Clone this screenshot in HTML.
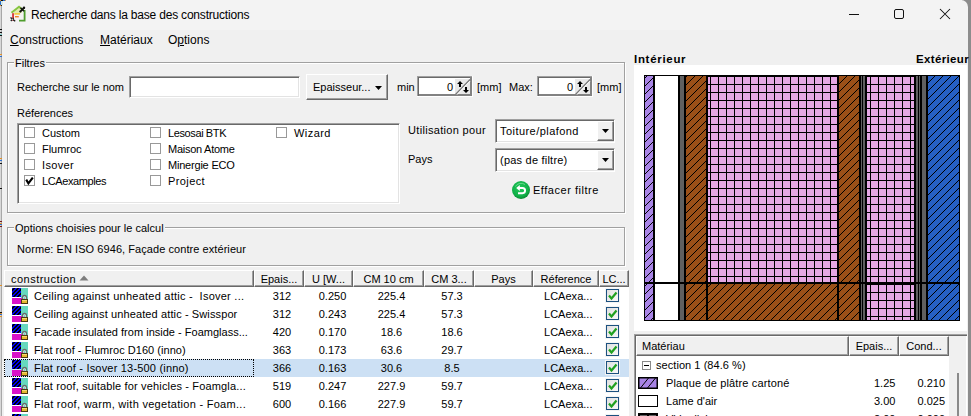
<!DOCTYPE html>
<html><head><meta charset="utf-8">
<style>
*{box-sizing:border-box}
html,body{margin:0;padding:0}
body{width:971px;height:416px;overflow:hidden;position:relative;background:#f0f0f0;font-family:"Liberation Sans",sans-serif;font-size:11px;color:#000}
.a{position:absolute}
.t{position:absolute;white-space:nowrap;line-height:13px}
.gb{position:absolute;border:1px solid #a0a0a0;box-shadow:inset 1px 1px 0 #fff,1px 1px 0 #fff}
.gbl{position:absolute;background:#f0f0f0;padding:0 1px;line-height:13px;white-space:nowrap}
.sunk{position:absolute;background:#fff;border-top:1px solid #a0a0a0;border-left:1px solid #a0a0a0;border-right:1px solid #fff;border-bottom:1px solid #fff;box-shadow:inset 1px 1px 0 #696969,inset -1px -1px 0 #e3e3e3}
.cb{position:absolute;width:11px;height:11px;border:1px solid #999;background:#fff}
.hdr{position:absolute;top:270px;height:17px;background:#f0f0f0;border-top:1px solid #fff;border-left:1px solid #fff;border-right:1px solid #696969;border-bottom:1px solid #696969;box-shadow:inset -1px -1px 0 #a0a0a0;text-align:center;line-height:16px;white-space:nowrap;overflow:hidden}
.row{position:absolute;left:5px;width:624px;height:18px}
.c{position:absolute;top:3px;line-height:13px;white-space:nowrap}
.chk{position:absolute;left:606px;top:2px;width:13px;height:13px;border:1px solid #1c5180;background:linear-gradient(135deg,#e0e0e0,#f8f8f8);box-shadow:0 0 0 1px #f4f4f4}
</style></head>
<body>
<!-- left edge behind window -->
<div class="a" style="left:0;top:0;width:2px;height:416px;background:#d8d8d8"></div>
<div class="a" style="left:1px;top:0;width:1px;height:416px;background:#a8a8a8"></div>
<svg class="a" style="left:0;top:0;z-index:1" width="2" height="416" shape-rendering="crispEdges"><rect x="0" y="29" width="2" height="1" fill="#111"/><rect x="0" y="32" width="2" height="1" fill="#111"/><rect x="0" y="34" width="2" height="1" fill="#7fd0d0"/><rect x="0" y="35" width="2" height="1" fill="#111"/><rect x="0" y="54" width="2" height="1" fill="#e0902a"/><rect x="0" y="56" width="2" height="1" fill="#2a6ed0"/><rect x="0" y="158" width="2" height="1" fill="#e0902a"/><rect x="0" y="160" width="2" height="1" fill="#2a6ed0"/><rect x="0" y="163" width="2" height="1" fill="#111"/><rect x="0" y="188" width="2" height="1" fill="#111"/><rect x="0" y="221" width="2" height="1" fill="#7a1a1a"/><rect x="0" y="223" width="2" height="1" fill="#e0902a"/><rect x="0" y="224" width="2" height="1" fill="#2a6ed0"/><rect x="0" y="226" width="2" height="1" fill="#7a1a1a"/><rect x="0" y="285" width="2" height="1" fill="#e0902a"/><rect x="0" y="312" width="2" height="1" fill="#111"/><rect x="0" y="313" width="2" height="1" fill="#e0902a"/><rect x="0" y="314" width="2" height="1" fill="#2a6ed0"/><rect x="0" y="316" width="2" height="1" fill="#e0902a"/></svg>
<!-- right edge -->
<div class="a" style="left:968px;top:0;width:3px;height:416px;background:#8c8c8c"></div>
<!-- title bar -->
<div class="a" style="left:2px;top:0;width:966px;height:30px;background:#f3f3f3;border-top-right-radius:7px"></div>
<div class="a" style="left:962px;top:0;width:6px;height:7px;background:#8c8c8c;z-index:0"></div>
<div class="a" style="left:2px;top:0;width:966px;height:30px;background:#f3f3f3;border-top-right-radius:7px;z-index:1"></div>
<svg class="a" style="left:0;top:0;z-index:1" width="8" height="8" shape-rendering="crispEdges"><rect x="0" y="0" width="1" height="1" fill="#e0902a"/><rect x="1" y="0" width="2" height="1" fill="#111"/><rect x="3" y="0" width="2" height="1" fill="#2a6ed0"/><rect x="5" y="0" width="1" height="1" fill="#d8a050"/><rect x="0" y="1" width="1" height="4" fill="#2a6ed0"/><rect x="1" y="1" width="2" height="4" fill="#cfe8e8"/><rect x="0" y="5" width="1" height="1" fill="#e0902a"/><rect x="1" y="5" width="1" height="1" fill="#222"/></svg>
<!-- title icon -->
<svg class="a" style="left:9px;top:5px;z-index:2" width="17" height="17" viewBox="0 0 17 17">
 <path d="M5 7 L10 3 L13 5.5 L13 8 L5 8Z" fill="#d8e890" opacity="0.7"/>
 <path d="M2.5 7.8 L10 1.8 L14.5 5.5" fill="none" stroke="#86c540" stroke-width="2"/>
 <path d="M15.6 5 V15.6 H10" fill="none" stroke="#4f9d2d" stroke-width="1.8"/>
 <rect x="3.2" y="8.2" width="1.7" height="7.6" fill="#d2282c"/>
 <rect x="5.3" y="8.2" width="5.8" height="1.4" fill="#f4c21c"/>
 <rect x="6" y="11" width="3.8" height="1.4" fill="#ef8226"/>
 <path d="M11 6.8 L15.2 2.6" stroke="#111" stroke-width="1.8"/>
 <path d="M11.5 2.8 L15 6.3" stroke="#111" stroke-width="1.3"/>
 <circle cx="15" cy="2.8" r="1.2" fill="#111"/><circle cx="11.3" cy="6.6" r="1" fill="#111"/>
 <path d="M1.5 12.5 L6.2 16.2" stroke="#1a1a1a" stroke-width="1.4"/>
 <path d="M1.8 16 L4.6 12.8" stroke="#1a1a1a" stroke-width="1.2"/>
 <circle cx="3.4" cy="14.3" r="0.9" fill="#bbb"/>
</svg>
<div class="t" style="left:31px;top:8px;font-size:12px;line-height:14px;z-index:2;letter-spacing:-0.198px">Recherche dans la base des constructions</div>
<!-- window controls -->
<svg class="a" style="left:845px;top:5px;z-index:2" width="115" height="20">
 <rect x="4" y="9" width="10" height="1" fill="#111"/>
 <rect x="49.5" y="4.5" width="9" height="9" rx="1.5" fill="none" stroke="#111" stroke-width="1"/>
 <path d="M95 4 L105 14 M105 4 L95 14" stroke="#111" stroke-width="1.05"/>
</svg>
<!-- menu -->
<div class="t" style="left:10px;top:33px;font-size:12px;line-height:14px"><u>C</u>onstructions</div>
<div class="t" style="left:100px;top:33px;font-size:12px;line-height:14px"><u>M</u>atériaux</div>
<div class="t" style="left:168px;top:33px;font-size:12px;line-height:14px">O<u>p</u>tions</div>

<!-- Filtres group -->
<div class="gb" style="left:7px;top:62px;width:618px;height:151px"></div>
<div class="gbl" style="left:14px;top:57px">Filtres</div>
<div class="t" style="left:17px;top:81px;letter-spacing:-0.032px">Recherche sur le nom</div>
<div class="sunk" style="left:129px;top:76px;width:171px;height:22px"></div>
<!-- Epaisseur button -->
<div class="a" style="left:306px;top:74px;width:82px;height:26px;background:#f0f0f0;border-top:1px solid #fff;border-left:1px solid #fff;border-right:1px solid #696969;border-bottom:1px solid #696969;box-shadow:inset -1px -1px 0 #a0a0a0"></div>
<div class="t" style="left:313px;top:81px">Epaisseur...</div>
<svg class="a" style="left:375px;top:86px" width="8" height="4"><path d="M0 0H7L3.5 4Z" fill="#000"/></svg>
<div class="t" style="left:397px;top:81px">min</div>
<svg class="a" style="left:417px;top:76px" width="56" height="21" viewBox="0 0 56 21" shape-rendering="crispEdges"><rect width="56" height="21" fill="#fff"/><rect x="0" y="0" width="55" height="1" fill="#a0a0a0"/><rect x="0" y="0" width="1" height="20" fill="#a0a0a0"/><rect x="1" y="1" width="54" height="1" fill="#696969"/><rect x="1" y="1" width="1" height="19" fill="#696969"/><rect x="38" y="3" width="17" height="17" fill="#e8e8e8"/><rect x="53" y="1" width="2" height="19" fill="#828282"/><rect x="2" y="18" width="53" height="2" fill="#828282"/><path d="M38.5 18.5 L53 3.5" stroke="#7a7a7a" stroke-width="1.3" shape-rendering="auto"/><path d="M40 18.6 L53 5.2" stroke="#ffffff" stroke-width="1" shape-rendering="auto"/><path d="M40 8 L43 5 L46 8 H44 V11 H42 V8 Z" fill="#000" shape-rendering="auto"/><path d="M48 11 H50 V14 H52 L49 17 L46 14 H48 Z" fill="#000" shape-rendering="auto"/></svg>
<div class="t" style="left:447px;top:81px">0</div>

<div class="t" style="left:477px;top:81px">[mm]</div>
<div class="t" style="left:509px;top:81px">Max:</div>
<svg class="a" style="left:537px;top:76px" width="56" height="21" viewBox="0 0 56 21" shape-rendering="crispEdges"><rect width="56" height="21" fill="#fff"/><rect x="0" y="0" width="55" height="1" fill="#a0a0a0"/><rect x="0" y="0" width="1" height="20" fill="#a0a0a0"/><rect x="1" y="1" width="54" height="1" fill="#696969"/><rect x="1" y="1" width="1" height="19" fill="#696969"/><rect x="38" y="3" width="17" height="17" fill="#e8e8e8"/><rect x="53" y="1" width="2" height="19" fill="#828282"/><rect x="2" y="18" width="53" height="2" fill="#828282"/><path d="M38.5 18.5 L53 3.5" stroke="#7a7a7a" stroke-width="1.3" shape-rendering="auto"/><path d="M40 18.6 L53 5.2" stroke="#ffffff" stroke-width="1" shape-rendering="auto"/><path d="M40 8 L43 5 L46 8 H44 V11 H42 V8 Z" fill="#000" shape-rendering="auto"/><path d="M48 11 H50 V14 H52 L49 17 L46 14 H48 Z" fill="#000" shape-rendering="auto"/></svg>
<div class="t" style="left:567px;top:81px">0</div>

<div class="t" style="left:597px;top:81px">[mm]</div>

<div class="t" style="left:17px;top:107px;letter-spacing:-0.030px">Réferences</div>
<div class="sunk" style="left:17px;top:123px;width:383px;height:81px"></div>
<div class="cb" style="left:24px;top:127px"></div><div class="t" style="left:42px;top:127px;letter-spacing:0.019px">Custom</div>
<div class="cb" style="left:24px;top:143px"></div><div class="t" style="left:42px;top:143px;letter-spacing:-0.039px">Flumroc</div>
<div class="cb" style="left:24px;top:159px"></div><div class="t" style="left:42px;top:159px;letter-spacing:0.326px">Isover</div>
<div class="cb" style="left:24px;top:175px"></div><div class="t" style="left:42px;top:175px;letter-spacing:-0.398px">LCAexamples</div>
<svg class="a" style="left:25px;top:177px" width="10" height="9"><path d="M1.2 2.6 L3.4 6.3 L7.8 0.6" fill="none" stroke="#000" stroke-width="2.1"/></svg>
<div class="cb" style="left:150px;top:127px"></div><div class="t" style="left:168px;top:127px;letter-spacing:-0.388px">Lesosai BTK</div>
<div class="cb" style="left:150px;top:143px"></div><div class="t" style="left:168px;top:143px;letter-spacing:-0.264px">Maison Atome</div>
<div class="cb" style="left:150px;top:159px"></div><div class="t" style="left:168px;top:159px;letter-spacing:-0.207px">Minergie ECO</div>
<div class="cb" style="left:150px;top:175px"></div><div class="t" style="left:168px;top:175px;letter-spacing:0.392px">Project</div>
<div class="cb" style="left:276px;top:127px"></div><div class="t" style="left:294px;top:127px;letter-spacing:0.433px">Wizard</div>

<div class="t" style="left:408px;top:124px;letter-spacing:0.322px">Utilisation pour</div>
<div class="sunk" style="left:495px;top:119px;width:120px;height:24px"></div>
<div class="t" style="left:500px;top:125px;letter-spacing:0.452px">Toiture/plafond</div>
<div class="a" style="left:597px;top:121px;width:17px;height:20px;background:#f0f0f0;border-top:1px solid #fff;border-left:1px solid #fff;border-right:1px solid #696969;border-bottom:1px solid #696969;box-shadow:inset -1px -1px 0 #a0a0a0"></div>
<svg class="a" style="left:602px;top:129px" width="8" height="4"><path d="M0 0H7L3.5 4Z" fill="#000"/></svg>
<div class="t" style="left:408px;top:153px">Pays</div>
<div class="sunk" style="left:495px;top:148px;width:120px;height:24px"></div>
<div class="t" style="left:500px;top:154px;letter-spacing:0.221px">(pas de filtre)</div>
<div class="a" style="left:597px;top:150px;width:17px;height:20px;background:#f0f0f0;border-top:1px solid #fff;border-left:1px solid #fff;border-right:1px solid #696969;border-bottom:1px solid #696969;box-shadow:inset -1px -1px 0 #a0a0a0"></div>
<svg class="a" style="left:602px;top:158px" width="8" height="4"><path d="M0 0H7L3.5 4Z" fill="#000"/></svg>
<svg class="a" style="left:511px;top:180px" width="20" height="20" viewBox="0 0 20 20"><defs><radialGradient id="gg" cx="0.45" cy="0.4" r="0.6"><stop offset="0" stop-color="#22c85a"/><stop offset="0.75" stop-color="#10b048"/><stop offset="1" stop-color="#07892e"/></radialGradient></defs><circle cx="10" cy="10" r="9" fill="url(#gg)"/><path d="M4.5 6.5 A6 5 0 0 1 14 4.5" fill="none" stroke="#9af0b0" stroke-width="1" opacity="0.6"/><path d="M8 8 H11.5 A2.6 2.6 0 0 1 11.5 13.2 H7" fill="none" stroke="#fff" stroke-width="1.9"/><path d="M5.2 8 L8.8 5 V11Z" fill="#fff"/></svg>
<div class="t" style="left:533px;top:184px;letter-spacing:0.531px">Effacer filtre</div>

<!-- Options group -->
<div class="gb" style="left:7px;top:227px;width:618px;height:39px"></div>
<div class="gbl" style="left:14px;top:222px">Options choisies pour le calcul</div>
<div class="t" style="left:17px;top:243px;letter-spacing:0.064px">Norme: EN ISO 6946, Façade contre extérieur</div>

<!-- list view -->
<div class="a" style="left:4px;top:270px;width:625px;height:146px;background:#fff"></div>
<div class="hdr" style="left:4px;width:250px;text-align:left;padding-left:6px"><span style="letter-spacing:0.481px">construction</span> <svg width="10" height="6" style="vertical-align:2px"><path d="M0.5 5.5 L5 0.5 L9.5 5.5Z" fill="#7d7d7d"/></svg></div>
<div class="hdr" style="left:254px;width:50px">Epais...</div>
<div class="hdr" style="left:304px;width:49px">U [W...</div>
<div class="hdr" style="left:353px;width:71px">CM 10 cm</div>
<div class="hdr" style="left:424px;width:50px">CM 3...</div>
<div class="hdr" style="left:474px;width:59px">Pays</div>
<div class="hdr" style="left:533px;width:66px">Réference</div>
<div class="hdr" style="left:599px;width:30px">LC...</div>

<div class="row" style="top:287px;"><svg class="a" style="left:7px;top:1px" width="16" height="16" viewBox="0 0 16 16" shape-rendering="crispEdges"><rect x="0" y="0" width="9" height="9" fill="#0000f0"/><rect x="0" y="1" width="1" height="1" fill="#000"/><rect x="0" y="2" width="1" height="1" fill="#000"/><rect x="0" y="5" width="1" height="1" fill="#000"/><rect x="0" y="6" width="1" height="1" fill="#000"/><rect x="1" y="0" width="1" height="1" fill="#000"/><rect x="1" y="1" width="1" height="1" fill="#000"/><rect x="1" y="4" width="1" height="1" fill="#000"/><rect x="1" y="5" width="1" height="1" fill="#000"/><rect x="1" y="8" width="1" height="1" fill="#000"/><rect x="2" y="0" width="1" height="1" fill="#000"/><rect x="2" y="3" width="1" height="1" fill="#000"/><rect x="2" y="4" width="1" height="1" fill="#000"/><rect x="2" y="7" width="1" height="1" fill="#000"/><rect x="2" y="8" width="1" height="1" fill="#000"/><rect x="3" y="2" width="1" height="1" fill="#000"/><rect x="3" y="3" width="1" height="1" fill="#000"/><rect x="3" y="6" width="1" height="1" fill="#000"/><rect x="3" y="7" width="1" height="1" fill="#000"/><rect x="4" y="1" width="1" height="1" fill="#000"/><rect x="4" y="2" width="1" height="1" fill="#000"/><rect x="4" y="5" width="1" height="1" fill="#000"/><rect x="4" y="6" width="1" height="1" fill="#000"/><rect x="5" y="0" width="1" height="1" fill="#000"/><rect x="5" y="1" width="1" height="1" fill="#000"/><rect x="5" y="4" width="1" height="1" fill="#000"/><rect x="5" y="5" width="1" height="1" fill="#000"/><rect x="5" y="8" width="1" height="1" fill="#000"/><rect x="6" y="0" width="1" height="1" fill="#000"/><rect x="6" y="3" width="1" height="1" fill="#000"/><rect x="6" y="4" width="1" height="1" fill="#000"/><rect x="6" y="7" width="1" height="1" fill="#000"/><rect x="6" y="8" width="1" height="1" fill="#000"/><rect x="7" y="2" width="1" height="1" fill="#000"/><rect x="7" y="3" width="1" height="1" fill="#000"/><rect x="7" y="6" width="1" height="1" fill="#000"/><rect x="7" y="7" width="1" height="1" fill="#000"/><rect x="8" y="1" width="1" height="1" fill="#000"/><rect x="8" y="2" width="1" height="1" fill="#000"/><rect x="8" y="5" width="1" height="1" fill="#000"/><rect x="8" y="6" width="1" height="1" fill="#000"/><rect x="9" y="0" width="7" height="11" fill="#66d8be"/><rect x="0" y="10" width="12" height="6" fill="#d812c8"/><path d="M10.5 12V9.5A2 2 0 0 1 14.5 9.5V12" fill="none" stroke="#6a6a6a" stroke-width="1.3" shape-rendering="auto"/><path d="M11.4 12V9.8A1.1 1.1 0 0 1 13.6 9.8V12" fill="none" stroke="#e8e8e8" stroke-width="0.7" shape-rendering="auto"/><rect x="9" y="11" width="7" height="5" fill="#4a3a10"/><rect x="10" y="12" width="5" height="3" fill="#e6b830"/><rect x="10" y="12" width="5" height="1" fill="#f6d870"/></svg><div class="c" style="left:29px;letter-spacing:0.248px">Ceiling against unheated attic - &nbsp;Isover ...</div><div class="c" style="left:252px;width:50px;text-align:center">312</div><div class="c" style="left:303px;width:49px;text-align:center">0.250</div><div class="c" style="left:351px;width:71px;text-align:center">225.4</div><div class="c" style="left:422px;width:50px;text-align:center">57.3</div><div class="c" style="left:539px;letter-spacing:0.023px">LCAexa...</div><div class="chk" style="left:601px"><svg width="11" height="11" style="position:absolute;left:0;top:0"><path d="M2 5.5 L4.5 8.5 L9.5 2.5" fill="none" stroke="#20a020" stroke-width="2.2"/></svg></div></div>
<div class="row" style="top:305px;"><svg class="a" style="left:7px;top:1px" width="16" height="16" viewBox="0 0 16 16" shape-rendering="crispEdges"><rect x="0" y="0" width="9" height="9" fill="#0000f0"/><rect x="0" y="1" width="1" height="1" fill="#000"/><rect x="0" y="2" width="1" height="1" fill="#000"/><rect x="0" y="5" width="1" height="1" fill="#000"/><rect x="0" y="6" width="1" height="1" fill="#000"/><rect x="1" y="0" width="1" height="1" fill="#000"/><rect x="1" y="1" width="1" height="1" fill="#000"/><rect x="1" y="4" width="1" height="1" fill="#000"/><rect x="1" y="5" width="1" height="1" fill="#000"/><rect x="1" y="8" width="1" height="1" fill="#000"/><rect x="2" y="0" width="1" height="1" fill="#000"/><rect x="2" y="3" width="1" height="1" fill="#000"/><rect x="2" y="4" width="1" height="1" fill="#000"/><rect x="2" y="7" width="1" height="1" fill="#000"/><rect x="2" y="8" width="1" height="1" fill="#000"/><rect x="3" y="2" width="1" height="1" fill="#000"/><rect x="3" y="3" width="1" height="1" fill="#000"/><rect x="3" y="6" width="1" height="1" fill="#000"/><rect x="3" y="7" width="1" height="1" fill="#000"/><rect x="4" y="1" width="1" height="1" fill="#000"/><rect x="4" y="2" width="1" height="1" fill="#000"/><rect x="4" y="5" width="1" height="1" fill="#000"/><rect x="4" y="6" width="1" height="1" fill="#000"/><rect x="5" y="0" width="1" height="1" fill="#000"/><rect x="5" y="1" width="1" height="1" fill="#000"/><rect x="5" y="4" width="1" height="1" fill="#000"/><rect x="5" y="5" width="1" height="1" fill="#000"/><rect x="5" y="8" width="1" height="1" fill="#000"/><rect x="6" y="0" width="1" height="1" fill="#000"/><rect x="6" y="3" width="1" height="1" fill="#000"/><rect x="6" y="4" width="1" height="1" fill="#000"/><rect x="6" y="7" width="1" height="1" fill="#000"/><rect x="6" y="8" width="1" height="1" fill="#000"/><rect x="7" y="2" width="1" height="1" fill="#000"/><rect x="7" y="3" width="1" height="1" fill="#000"/><rect x="7" y="6" width="1" height="1" fill="#000"/><rect x="7" y="7" width="1" height="1" fill="#000"/><rect x="8" y="1" width="1" height="1" fill="#000"/><rect x="8" y="2" width="1" height="1" fill="#000"/><rect x="8" y="5" width="1" height="1" fill="#000"/><rect x="8" y="6" width="1" height="1" fill="#000"/><rect x="9" y="0" width="7" height="11" fill="#66d8be"/><rect x="0" y="10" width="12" height="6" fill="#d812c8"/><path d="M10.5 12V9.5A2 2 0 0 1 14.5 9.5V12" fill="none" stroke="#6a6a6a" stroke-width="1.3" shape-rendering="auto"/><path d="M11.4 12V9.8A1.1 1.1 0 0 1 13.6 9.8V12" fill="none" stroke="#e8e8e8" stroke-width="0.7" shape-rendering="auto"/><rect x="9" y="11" width="7" height="5" fill="#4a3a10"/><rect x="10" y="12" width="5" height="3" fill="#e6b830"/><rect x="10" y="12" width="5" height="1" fill="#f6d870"/></svg><div class="c" style="left:29px;letter-spacing:0.114px">Ceiling against unheated attic - Swisspor</div><div class="c" style="left:252px;width:50px;text-align:center">312</div><div class="c" style="left:303px;width:49px;text-align:center">0.243</div><div class="c" style="left:351px;width:71px;text-align:center">225.4</div><div class="c" style="left:422px;width:50px;text-align:center">57.3</div><div class="c" style="left:539px;letter-spacing:0.023px">LCAexa...</div><div class="chk" style="left:601px"><svg width="11" height="11" style="position:absolute;left:0;top:0"><path d="M2 5.5 L4.5 8.5 L9.5 2.5" fill="none" stroke="#20a020" stroke-width="2.2"/></svg></div></div>
<div class="row" style="top:323px;"><svg class="a" style="left:7px;top:1px" width="16" height="16" viewBox="0 0 16 16" shape-rendering="crispEdges"><rect x="0" y="0" width="9" height="9" fill="#0000f0"/><rect x="0" y="1" width="1" height="1" fill="#000"/><rect x="0" y="2" width="1" height="1" fill="#000"/><rect x="0" y="5" width="1" height="1" fill="#000"/><rect x="0" y="6" width="1" height="1" fill="#000"/><rect x="1" y="0" width="1" height="1" fill="#000"/><rect x="1" y="1" width="1" height="1" fill="#000"/><rect x="1" y="4" width="1" height="1" fill="#000"/><rect x="1" y="5" width="1" height="1" fill="#000"/><rect x="1" y="8" width="1" height="1" fill="#000"/><rect x="2" y="0" width="1" height="1" fill="#000"/><rect x="2" y="3" width="1" height="1" fill="#000"/><rect x="2" y="4" width="1" height="1" fill="#000"/><rect x="2" y="7" width="1" height="1" fill="#000"/><rect x="2" y="8" width="1" height="1" fill="#000"/><rect x="3" y="2" width="1" height="1" fill="#000"/><rect x="3" y="3" width="1" height="1" fill="#000"/><rect x="3" y="6" width="1" height="1" fill="#000"/><rect x="3" y="7" width="1" height="1" fill="#000"/><rect x="4" y="1" width="1" height="1" fill="#000"/><rect x="4" y="2" width="1" height="1" fill="#000"/><rect x="4" y="5" width="1" height="1" fill="#000"/><rect x="4" y="6" width="1" height="1" fill="#000"/><rect x="5" y="0" width="1" height="1" fill="#000"/><rect x="5" y="1" width="1" height="1" fill="#000"/><rect x="5" y="4" width="1" height="1" fill="#000"/><rect x="5" y="5" width="1" height="1" fill="#000"/><rect x="5" y="8" width="1" height="1" fill="#000"/><rect x="6" y="0" width="1" height="1" fill="#000"/><rect x="6" y="3" width="1" height="1" fill="#000"/><rect x="6" y="4" width="1" height="1" fill="#000"/><rect x="6" y="7" width="1" height="1" fill="#000"/><rect x="6" y="8" width="1" height="1" fill="#000"/><rect x="7" y="2" width="1" height="1" fill="#000"/><rect x="7" y="3" width="1" height="1" fill="#000"/><rect x="7" y="6" width="1" height="1" fill="#000"/><rect x="7" y="7" width="1" height="1" fill="#000"/><rect x="8" y="1" width="1" height="1" fill="#000"/><rect x="8" y="2" width="1" height="1" fill="#000"/><rect x="8" y="5" width="1" height="1" fill="#000"/><rect x="8" y="6" width="1" height="1" fill="#000"/><rect x="9" y="0" width="7" height="11" fill="#66d8be"/><rect x="0" y="10" width="12" height="6" fill="#d812c8"/><path d="M10.5 12V9.5A2 2 0 0 1 14.5 9.5V12" fill="none" stroke="#6a6a6a" stroke-width="1.3" shape-rendering="auto"/><path d="M11.4 12V9.8A1.1 1.1 0 0 1 13.6 9.8V12" fill="none" stroke="#e8e8e8" stroke-width="0.7" shape-rendering="auto"/><rect x="9" y="11" width="7" height="5" fill="#4a3a10"/><rect x="10" y="12" width="5" height="3" fill="#e6b830"/><rect x="10" y="12" width="5" height="1" fill="#f6d870"/></svg><div class="c" style="left:29px;letter-spacing:0.013px">Facade insulated from inside - Foamglass...</div><div class="c" style="left:252px;width:50px;text-align:center">420</div><div class="c" style="left:303px;width:49px;text-align:center">0.170</div><div class="c" style="left:351px;width:71px;text-align:center">18.6</div><div class="c" style="left:422px;width:50px;text-align:center">18.6</div><div class="c" style="left:539px;letter-spacing:0.023px">LCAexa...</div><div class="chk" style="left:601px"><svg width="11" height="11" style="position:absolute;left:0;top:0"><path d="M2 5.5 L4.5 8.5 L9.5 2.5" fill="none" stroke="#20a020" stroke-width="2.2"/></svg></div></div>
<div class="row" style="top:341px;"><svg class="a" style="left:7px;top:1px" width="16" height="16" viewBox="0 0 16 16" shape-rendering="crispEdges"><rect x="0" y="0" width="9" height="9" fill="#0000f0"/><rect x="0" y="1" width="1" height="1" fill="#000"/><rect x="0" y="2" width="1" height="1" fill="#000"/><rect x="0" y="5" width="1" height="1" fill="#000"/><rect x="0" y="6" width="1" height="1" fill="#000"/><rect x="1" y="0" width="1" height="1" fill="#000"/><rect x="1" y="1" width="1" height="1" fill="#000"/><rect x="1" y="4" width="1" height="1" fill="#000"/><rect x="1" y="5" width="1" height="1" fill="#000"/><rect x="1" y="8" width="1" height="1" fill="#000"/><rect x="2" y="0" width="1" height="1" fill="#000"/><rect x="2" y="3" width="1" height="1" fill="#000"/><rect x="2" y="4" width="1" height="1" fill="#000"/><rect x="2" y="7" width="1" height="1" fill="#000"/><rect x="2" y="8" width="1" height="1" fill="#000"/><rect x="3" y="2" width="1" height="1" fill="#000"/><rect x="3" y="3" width="1" height="1" fill="#000"/><rect x="3" y="6" width="1" height="1" fill="#000"/><rect x="3" y="7" width="1" height="1" fill="#000"/><rect x="4" y="1" width="1" height="1" fill="#000"/><rect x="4" y="2" width="1" height="1" fill="#000"/><rect x="4" y="5" width="1" height="1" fill="#000"/><rect x="4" y="6" width="1" height="1" fill="#000"/><rect x="5" y="0" width="1" height="1" fill="#000"/><rect x="5" y="1" width="1" height="1" fill="#000"/><rect x="5" y="4" width="1" height="1" fill="#000"/><rect x="5" y="5" width="1" height="1" fill="#000"/><rect x="5" y="8" width="1" height="1" fill="#000"/><rect x="6" y="0" width="1" height="1" fill="#000"/><rect x="6" y="3" width="1" height="1" fill="#000"/><rect x="6" y="4" width="1" height="1" fill="#000"/><rect x="6" y="7" width="1" height="1" fill="#000"/><rect x="6" y="8" width="1" height="1" fill="#000"/><rect x="7" y="2" width="1" height="1" fill="#000"/><rect x="7" y="3" width="1" height="1" fill="#000"/><rect x="7" y="6" width="1" height="1" fill="#000"/><rect x="7" y="7" width="1" height="1" fill="#000"/><rect x="8" y="1" width="1" height="1" fill="#000"/><rect x="8" y="2" width="1" height="1" fill="#000"/><rect x="8" y="5" width="1" height="1" fill="#000"/><rect x="8" y="6" width="1" height="1" fill="#000"/><rect x="9" y="0" width="7" height="11" fill="#66d8be"/><rect x="0" y="10" width="12" height="6" fill="#d812c8"/><path d="M10.5 12V9.5A2 2 0 0 1 14.5 9.5V12" fill="none" stroke="#6a6a6a" stroke-width="1.3" shape-rendering="auto"/><path d="M11.4 12V9.8A1.1 1.1 0 0 1 13.6 9.8V12" fill="none" stroke="#e8e8e8" stroke-width="0.7" shape-rendering="auto"/><rect x="9" y="11" width="7" height="5" fill="#4a3a10"/><rect x="10" y="12" width="5" height="3" fill="#e6b830"/><rect x="10" y="12" width="5" height="1" fill="#f6d870"/></svg><div class="c" style="left:29px;letter-spacing:0.044px">Flat roof - Flumroc D160 (inno)</div><div class="c" style="left:252px;width:50px;text-align:center">363</div><div class="c" style="left:303px;width:49px;text-align:center">0.173</div><div class="c" style="left:351px;width:71px;text-align:center">63.6</div><div class="c" style="left:422px;width:50px;text-align:center">29.7</div><div class="c" style="left:539px;letter-spacing:0.023px">LCAexa...</div><div class="chk" style="left:601px"><svg width="11" height="11" style="position:absolute;left:0;top:0"><path d="M2 5.5 L4.5 8.5 L9.5 2.5" fill="none" stroke="#20a020" stroke-width="2.2"/></svg></div></div>
<div class="row" style="top:359px;background:#cce0f4;"><svg class="a" style="left:7px;top:1px" width="16" height="16" viewBox="0 0 16 16" shape-rendering="crispEdges"><rect x="0" y="0" width="9" height="9" fill="#0000f0"/><rect x="0" y="1" width="1" height="1" fill="#000"/><rect x="0" y="2" width="1" height="1" fill="#000"/><rect x="0" y="5" width="1" height="1" fill="#000"/><rect x="0" y="6" width="1" height="1" fill="#000"/><rect x="1" y="0" width="1" height="1" fill="#000"/><rect x="1" y="1" width="1" height="1" fill="#000"/><rect x="1" y="4" width="1" height="1" fill="#000"/><rect x="1" y="5" width="1" height="1" fill="#000"/><rect x="1" y="8" width="1" height="1" fill="#000"/><rect x="2" y="0" width="1" height="1" fill="#000"/><rect x="2" y="3" width="1" height="1" fill="#000"/><rect x="2" y="4" width="1" height="1" fill="#000"/><rect x="2" y="7" width="1" height="1" fill="#000"/><rect x="2" y="8" width="1" height="1" fill="#000"/><rect x="3" y="2" width="1" height="1" fill="#000"/><rect x="3" y="3" width="1" height="1" fill="#000"/><rect x="3" y="6" width="1" height="1" fill="#000"/><rect x="3" y="7" width="1" height="1" fill="#000"/><rect x="4" y="1" width="1" height="1" fill="#000"/><rect x="4" y="2" width="1" height="1" fill="#000"/><rect x="4" y="5" width="1" height="1" fill="#000"/><rect x="4" y="6" width="1" height="1" fill="#000"/><rect x="5" y="0" width="1" height="1" fill="#000"/><rect x="5" y="1" width="1" height="1" fill="#000"/><rect x="5" y="4" width="1" height="1" fill="#000"/><rect x="5" y="5" width="1" height="1" fill="#000"/><rect x="5" y="8" width="1" height="1" fill="#000"/><rect x="6" y="0" width="1" height="1" fill="#000"/><rect x="6" y="3" width="1" height="1" fill="#000"/><rect x="6" y="4" width="1" height="1" fill="#000"/><rect x="6" y="7" width="1" height="1" fill="#000"/><rect x="6" y="8" width="1" height="1" fill="#000"/><rect x="7" y="2" width="1" height="1" fill="#000"/><rect x="7" y="3" width="1" height="1" fill="#000"/><rect x="7" y="6" width="1" height="1" fill="#000"/><rect x="7" y="7" width="1" height="1" fill="#000"/><rect x="8" y="1" width="1" height="1" fill="#000"/><rect x="8" y="2" width="1" height="1" fill="#000"/><rect x="8" y="5" width="1" height="1" fill="#000"/><rect x="8" y="6" width="1" height="1" fill="#000"/><rect x="9" y="0" width="7" height="11" fill="#66d8be"/><rect x="0" y="10" width="12" height="6" fill="#d812c8"/><path d="M10.5 12V9.5A2 2 0 0 1 14.5 9.5V12" fill="none" stroke="#6a6a6a" stroke-width="1.3" shape-rendering="auto"/><path d="M11.4 12V9.8A1.1 1.1 0 0 1 13.6 9.8V12" fill="none" stroke="#e8e8e8" stroke-width="0.7" shape-rendering="auto"/><rect x="9" y="11" width="7" height="5" fill="#4a3a10"/><rect x="10" y="12" width="5" height="3" fill="#e6b830"/><rect x="10" y="12" width="5" height="1" fill="#f6d870"/></svg><div class="c" style="left:29px;letter-spacing:0.191px">Flat roof - Isover 13-500 (inno)</div><div class="c" style="left:252px;width:50px;text-align:center">366</div><div class="c" style="left:303px;width:49px;text-align:center">0.163</div><div class="c" style="left:351px;width:71px;text-align:center">30.6</div><div class="c" style="left:422px;width:50px;text-align:center">8.5</div><div class="c" style="left:539px;letter-spacing:0.023px">LCAexa...</div><div class="chk" style="left:601px"><svg width="11" height="11" style="position:absolute;left:0;top:0"><path d="M2 5.5 L4.5 8.5 L9.5 2.5" fill="none" stroke="#20a020" stroke-width="2.2"/></svg></div><div class="a" style="left:-1px;top:0;width:250px;height:18px;border:1px dotted #000"></div></div>
<div class="row" style="top:377px;"><svg class="a" style="left:7px;top:1px" width="16" height="16" viewBox="0 0 16 16" shape-rendering="crispEdges"><rect x="0" y="0" width="9" height="9" fill="#0000f0"/><rect x="0" y="1" width="1" height="1" fill="#000"/><rect x="0" y="2" width="1" height="1" fill="#000"/><rect x="0" y="5" width="1" height="1" fill="#000"/><rect x="0" y="6" width="1" height="1" fill="#000"/><rect x="1" y="0" width="1" height="1" fill="#000"/><rect x="1" y="1" width="1" height="1" fill="#000"/><rect x="1" y="4" width="1" height="1" fill="#000"/><rect x="1" y="5" width="1" height="1" fill="#000"/><rect x="1" y="8" width="1" height="1" fill="#000"/><rect x="2" y="0" width="1" height="1" fill="#000"/><rect x="2" y="3" width="1" height="1" fill="#000"/><rect x="2" y="4" width="1" height="1" fill="#000"/><rect x="2" y="7" width="1" height="1" fill="#000"/><rect x="2" y="8" width="1" height="1" fill="#000"/><rect x="3" y="2" width="1" height="1" fill="#000"/><rect x="3" y="3" width="1" height="1" fill="#000"/><rect x="3" y="6" width="1" height="1" fill="#000"/><rect x="3" y="7" width="1" height="1" fill="#000"/><rect x="4" y="1" width="1" height="1" fill="#000"/><rect x="4" y="2" width="1" height="1" fill="#000"/><rect x="4" y="5" width="1" height="1" fill="#000"/><rect x="4" y="6" width="1" height="1" fill="#000"/><rect x="5" y="0" width="1" height="1" fill="#000"/><rect x="5" y="1" width="1" height="1" fill="#000"/><rect x="5" y="4" width="1" height="1" fill="#000"/><rect x="5" y="5" width="1" height="1" fill="#000"/><rect x="5" y="8" width="1" height="1" fill="#000"/><rect x="6" y="0" width="1" height="1" fill="#000"/><rect x="6" y="3" width="1" height="1" fill="#000"/><rect x="6" y="4" width="1" height="1" fill="#000"/><rect x="6" y="7" width="1" height="1" fill="#000"/><rect x="6" y="8" width="1" height="1" fill="#000"/><rect x="7" y="2" width="1" height="1" fill="#000"/><rect x="7" y="3" width="1" height="1" fill="#000"/><rect x="7" y="6" width="1" height="1" fill="#000"/><rect x="7" y="7" width="1" height="1" fill="#000"/><rect x="8" y="1" width="1" height="1" fill="#000"/><rect x="8" y="2" width="1" height="1" fill="#000"/><rect x="8" y="5" width="1" height="1" fill="#000"/><rect x="8" y="6" width="1" height="1" fill="#000"/><rect x="9" y="0" width="7" height="11" fill="#66d8be"/><rect x="0" y="10" width="12" height="6" fill="#d812c8"/><path d="M10.5 12V9.5A2 2 0 0 1 14.5 9.5V12" fill="none" stroke="#6a6a6a" stroke-width="1.3" shape-rendering="auto"/><path d="M11.4 12V9.8A1.1 1.1 0 0 1 13.6 9.8V12" fill="none" stroke="#e8e8e8" stroke-width="0.7" shape-rendering="auto"/><rect x="9" y="11" width="7" height="5" fill="#4a3a10"/><rect x="10" y="12" width="5" height="3" fill="#e6b830"/><rect x="10" y="12" width="5" height="1" fill="#f6d870"/></svg><div class="c" style="left:29px;letter-spacing:0.157px">Flat roof, suitable for vehicles - Foamgla...</div><div class="c" style="left:252px;width:50px;text-align:center">519</div><div class="c" style="left:303px;width:49px;text-align:center">0.247</div><div class="c" style="left:351px;width:71px;text-align:center">227.9</div><div class="c" style="left:422px;width:50px;text-align:center">59.7</div><div class="c" style="left:539px;letter-spacing:0.023px">LCAexa...</div><div class="chk" style="left:601px"><svg width="11" height="11" style="position:absolute;left:0;top:0"><path d="M2 5.5 L4.5 8.5 L9.5 2.5" fill="none" stroke="#20a020" stroke-width="2.2"/></svg></div></div>
<div class="row" style="top:395px;"><svg class="a" style="left:7px;top:1px" width="16" height="16" viewBox="0 0 16 16" shape-rendering="crispEdges"><rect x="0" y="0" width="9" height="9" fill="#0000f0"/><rect x="0" y="1" width="1" height="1" fill="#000"/><rect x="0" y="2" width="1" height="1" fill="#000"/><rect x="0" y="5" width="1" height="1" fill="#000"/><rect x="0" y="6" width="1" height="1" fill="#000"/><rect x="1" y="0" width="1" height="1" fill="#000"/><rect x="1" y="1" width="1" height="1" fill="#000"/><rect x="1" y="4" width="1" height="1" fill="#000"/><rect x="1" y="5" width="1" height="1" fill="#000"/><rect x="1" y="8" width="1" height="1" fill="#000"/><rect x="2" y="0" width="1" height="1" fill="#000"/><rect x="2" y="3" width="1" height="1" fill="#000"/><rect x="2" y="4" width="1" height="1" fill="#000"/><rect x="2" y="7" width="1" height="1" fill="#000"/><rect x="2" y="8" width="1" height="1" fill="#000"/><rect x="3" y="2" width="1" height="1" fill="#000"/><rect x="3" y="3" width="1" height="1" fill="#000"/><rect x="3" y="6" width="1" height="1" fill="#000"/><rect x="3" y="7" width="1" height="1" fill="#000"/><rect x="4" y="1" width="1" height="1" fill="#000"/><rect x="4" y="2" width="1" height="1" fill="#000"/><rect x="4" y="5" width="1" height="1" fill="#000"/><rect x="4" y="6" width="1" height="1" fill="#000"/><rect x="5" y="0" width="1" height="1" fill="#000"/><rect x="5" y="1" width="1" height="1" fill="#000"/><rect x="5" y="4" width="1" height="1" fill="#000"/><rect x="5" y="5" width="1" height="1" fill="#000"/><rect x="5" y="8" width="1" height="1" fill="#000"/><rect x="6" y="0" width="1" height="1" fill="#000"/><rect x="6" y="3" width="1" height="1" fill="#000"/><rect x="6" y="4" width="1" height="1" fill="#000"/><rect x="6" y="7" width="1" height="1" fill="#000"/><rect x="6" y="8" width="1" height="1" fill="#000"/><rect x="7" y="2" width="1" height="1" fill="#000"/><rect x="7" y="3" width="1" height="1" fill="#000"/><rect x="7" y="6" width="1" height="1" fill="#000"/><rect x="7" y="7" width="1" height="1" fill="#000"/><rect x="8" y="1" width="1" height="1" fill="#000"/><rect x="8" y="2" width="1" height="1" fill="#000"/><rect x="8" y="5" width="1" height="1" fill="#000"/><rect x="8" y="6" width="1" height="1" fill="#000"/><rect x="9" y="0" width="7" height="11" fill="#66d8be"/><rect x="0" y="10" width="12" height="6" fill="#d812c8"/><path d="M10.5 12V9.5A2 2 0 0 1 14.5 9.5V12" fill="none" stroke="#6a6a6a" stroke-width="1.3" shape-rendering="auto"/><path d="M11.4 12V9.8A1.1 1.1 0 0 1 13.6 9.8V12" fill="none" stroke="#e8e8e8" stroke-width="0.7" shape-rendering="auto"/><rect x="9" y="11" width="7" height="5" fill="#4a3a10"/><rect x="10" y="12" width="5" height="3" fill="#e6b830"/><rect x="10" y="12" width="5" height="1" fill="#f6d870"/></svg><div class="c" style="left:29px;letter-spacing:0.288px">Flat roof, warm, with vegetation - Foam...</div><div class="c" style="left:252px;width:50px;text-align:center">600</div><div class="c" style="left:303px;width:49px;text-align:center">0.166</div><div class="c" style="left:351px;width:71px;text-align:center">227.9</div><div class="c" style="left:422px;width:50px;text-align:center">59.7</div><div class="c" style="left:539px;letter-spacing:0.023px">LCAexa...</div><div class="chk" style="left:601px"><svg width="11" height="11" style="position:absolute;left:0;top:0"><path d="M2 5.5 L4.5 8.5 L9.5 2.5" fill="none" stroke="#20a020" stroke-width="2.2"/></svg></div></div>
<div class="row" style="top:413px;"><svg class="a" style="left:7px;top:1px" width="16" height="16" viewBox="0 0 16 16" shape-rendering="crispEdges"><rect x="0" y="0" width="9" height="9" fill="#0000f0"/><rect x="0" y="1" width="1" height="1" fill="#000"/><rect x="0" y="2" width="1" height="1" fill="#000"/><rect x="0" y="5" width="1" height="1" fill="#000"/><rect x="0" y="6" width="1" height="1" fill="#000"/><rect x="1" y="0" width="1" height="1" fill="#000"/><rect x="1" y="1" width="1" height="1" fill="#000"/><rect x="1" y="4" width="1" height="1" fill="#000"/><rect x="1" y="5" width="1" height="1" fill="#000"/><rect x="1" y="8" width="1" height="1" fill="#000"/><rect x="2" y="0" width="1" height="1" fill="#000"/><rect x="2" y="3" width="1" height="1" fill="#000"/><rect x="2" y="4" width="1" height="1" fill="#000"/><rect x="2" y="7" width="1" height="1" fill="#000"/><rect x="2" y="8" width="1" height="1" fill="#000"/><rect x="3" y="2" width="1" height="1" fill="#000"/><rect x="3" y="3" width="1" height="1" fill="#000"/><rect x="3" y="6" width="1" height="1" fill="#000"/><rect x="3" y="7" width="1" height="1" fill="#000"/><rect x="4" y="1" width="1" height="1" fill="#000"/><rect x="4" y="2" width="1" height="1" fill="#000"/><rect x="4" y="5" width="1" height="1" fill="#000"/><rect x="4" y="6" width="1" height="1" fill="#000"/><rect x="5" y="0" width="1" height="1" fill="#000"/><rect x="5" y="1" width="1" height="1" fill="#000"/><rect x="5" y="4" width="1" height="1" fill="#000"/><rect x="5" y="5" width="1" height="1" fill="#000"/><rect x="5" y="8" width="1" height="1" fill="#000"/><rect x="6" y="0" width="1" height="1" fill="#000"/><rect x="6" y="3" width="1" height="1" fill="#000"/><rect x="6" y="4" width="1" height="1" fill="#000"/><rect x="6" y="7" width="1" height="1" fill="#000"/><rect x="6" y="8" width="1" height="1" fill="#000"/><rect x="7" y="2" width="1" height="1" fill="#000"/><rect x="7" y="3" width="1" height="1" fill="#000"/><rect x="7" y="6" width="1" height="1" fill="#000"/><rect x="7" y="7" width="1" height="1" fill="#000"/><rect x="8" y="1" width="1" height="1" fill="#000"/><rect x="8" y="2" width="1" height="1" fill="#000"/><rect x="8" y="5" width="1" height="1" fill="#000"/><rect x="8" y="6" width="1" height="1" fill="#000"/><rect x="9" y="0" width="7" height="11" fill="#66d8be"/><rect x="0" y="10" width="12" height="6" fill="#d812c8"/><path d="M10.5 12V9.5A2 2 0 0 1 14.5 9.5V12" fill="none" stroke="#6a6a6a" stroke-width="1.3" shape-rendering="auto"/><path d="M11.4 12V9.8A1.1 1.1 0 0 1 13.6 9.8V12" fill="none" stroke="#e8e8e8" stroke-width="0.7" shape-rendering="auto"/><rect x="9" y="11" width="7" height="5" fill="#4a3a10"/><rect x="10" y="12" width="5" height="3" fill="#e6b830"/><rect x="10" y="12" width="5" height="1" fill="#f6d870"/></svg><div class="chk" style="left:601px"><svg width="11" height="11" style="position:absolute;left:0;top:0"><path d="M2 5.5 L4.5 8.5 L9.5 2.5" fill="none" stroke="#20a020" stroke-width="2.2"/></svg></div></div>

<!-- right panel -->
<div class="t" style="left:634px;top:52px;font-weight:bold;font-size:11.5px;line-height:14px;letter-spacing:0.698px">Intérieur</div>
<div class="t" style="left:916px;top:52px;font-weight:bold;font-size:11.5px;line-height:14px;letter-spacing:0.35px">Extérieur</div>
<div class="a" style="left:634px;top:65px;width:333px;height:266px;background:#fff"></div>

<svg class="a" style="left:644px;top:75px" width="316" height="246" viewBox="644 75 316 246" shape-rendering="crispEdges"><defs><pattern id="hp" patternUnits="userSpaceOnUse" x="0" y="0" width="8" height="8"><rect width="8" height="8" fill="#a884e6"/><path d="M0 2h1v1h-1zM1 1h1v1h-1zM2 0h1v1h-1zM3 7h1v1h-1zM4 6h1v1h-1zM5 5h1v1h-1zM6 4h1v1h-1zM7 3h1v1h-1z" fill="#000"/></pattern><pattern id="hb" patternUnits="userSpaceOnUse" x="0" y="0" width="8" height="8"><rect width="8" height="8" fill="#9b5018"/><path d="M0 2h1v1h-1zM1 1h1v1h-1zM2 0h1v1h-1zM3 7h1v1h-1zM4 6h1v1h-1zM5 5h1v1h-1zM6 4h1v1h-1zM7 3h1v1h-1z" fill="#000"/></pattern><pattern id="hu" patternUnits="userSpaceOnUse" x="0" y="0" width="8" height="8"><rect width="8" height="8" fill="#2660c4"/><path d="M0 2h1v1h-1zM1 1h1v1h-1zM2 0h1v1h-1zM3 7h1v1h-1zM4 6h1v1h-1zM5 5h1v1h-1zM6 4h1v1h-1zM7 3h1v1h-1z" fill="#000"/></pattern><pattern id="gp" patternUnits="userSpaceOnUse" x="0" y="0" width="8" height="8"><rect width="8" height="8" fill="#e6a8e4"/><rect x="6" y="0" width="1" height="8" fill="#000"/><rect x="0" y="4" width="8" height="1" fill="#000"/></pattern></defs><rect x="644" y="75" width="316" height="246" fill="#000"/><rect x="645" y="76" width="8" height="206" fill="url(#hp)"/><rect x="645" y="284" width="8" height="36" fill="url(#hp)"/><rect x="655" y="76" width="23" height="206" fill="#ffffff"/><rect x="655" y="284" width="23" height="36" fill="#ffffff"/><rect x="680" y="76" width="4" height="206" fill="#606060"/><rect x="680" y="284" width="4" height="36" fill="#606060"/><rect x="686" y="76" width="20" height="206" fill="url(#hb)"/><rect x="686" y="284" width="20" height="36" fill="url(#hb)"/><rect x="708" y="76" width="129" height="206" fill="url(#gp)"/><rect x="708" y="284" width="129" height="36" fill="url(#hb)"/><rect x="839" y="76" width="20" height="206" fill="url(#hb)"/><rect x="839" y="284" width="20" height="36" fill="url(#hb)"/><rect x="861" y="76" width="1" height="206" fill="#606060"/><rect x="861" y="284" width="1" height="36" fill="#606060"/><rect x="863" y="76" width="2" height="206" fill="#606060"/><rect x="863" y="284" width="2" height="36" fill="#606060"/><rect x="867" y="76" width="47" height="206" fill="url(#gp)"/><rect x="867" y="284" width="47" height="36" fill="url(#gp)"/><rect x="916" y="76" width="2" height="206" fill="#606060"/><rect x="916" y="284" width="2" height="36" fill="#606060"/><rect x="919" y="76" width="1" height="206" fill="#606060"/><rect x="919" y="284" width="1" height="36" fill="#606060"/><rect x="922" y="76" width="4" height="206" fill="#606060"/><rect x="922" y="284" width="4" height="36" fill="#606060"/><rect x="928" y="76" width="31" height="206" fill="url(#hu)"/><rect x="928" y="284" width="31" height="36" fill="url(#hu)"/></svg>
<!-- material list -->
<div class="sunk" style="left:634px;top:334px;width:333px;height:82px;border-bottom:0;border-right:0;box-shadow:inset 1px 1px 0 #696969"></div>
<div class="a" style="left:949px;top:336px;width:17px;height:80px;background:#f0f0f0"></div>
<div class="a" style="left:957px;top:373px;width:2px;height:43px;background:#8a8a8a"></div>
<div class="hdr" style="left:636px;top:336px;width:213px;height:20px;text-align:left;padding-left:5px;line-height:19px">Matériau</div>
<div class="hdr" style="left:849px;top:336px;width:50px;height:20px;line-height:19px">Epais...</div>
<div class="hdr" style="left:899px;top:336px;width:50px;height:20px;line-height:19px">Cond...</div>
<div class="a" style="left:642px;top:361px;width:9px;height:9px;border:1px solid #8a8a8a;background:#fff"></div>
<div class="a" style="left:644px;top:365px;width:5px;height:1px;background:#000"></div>
<div class="t" style="left:656px;top:359px;letter-spacing:0.056px">section 1 (84.6 %)</div>
<svg class="a" style="left:638px;top:377px" width="20" height="12" viewBox="0 0 20 12"><rect x="0.75" y="0.75" width="18.5" height="10.5" fill="#a884e6" stroke="#000" stroke-width="1.5"/><path d="M2.5 11 L10.5 1 M9.5 11 L17.5 1" stroke="#000" stroke-width="1"/></svg>
<div class="t" style="left:666px;top:377px;letter-spacing:0.153px">Plaque de plâtre cartoné</div>
<div class="t" style="left:874px;top:377px;width:20px;text-align:right">1.25</div>
<div class="t" style="left:914px;top:377px;width:31px;text-align:right">0.210</div>
<div class="a" style="left:638px;top:395px;width:20px;height:12px;border:1.5px solid #000;background:#fff"></div>
<div class="t" style="left:666px;top:395px;letter-spacing:0.020px">Lame d'air</div>
<div class="t" style="left:874px;top:395px;width:20px;text-align:right">3.00</div>
<div class="t" style="left:914px;top:395px;width:31px;text-align:right">0.025</div>
<svg class="a" style="left:638px;top:413px" width="20" height="3" viewBox="0 0 20 3" shape-rendering="crispEdges"><rect width="20" height="3" fill="#000"/><rect x="2" y="2" width="7" height="1" fill="#666"/><rect x="11" y="2" width="7" height="1" fill="#666"/></svg>
<div class="t" style="left:666px;top:413px">Vide d'air</div>
<div class="t" style="left:874px;top:413px;width:20px;text-align:right">2.00</div>
<div class="t" style="left:914px;top:413px;width:31px;text-align:right">0.000</div>
</body></html>
